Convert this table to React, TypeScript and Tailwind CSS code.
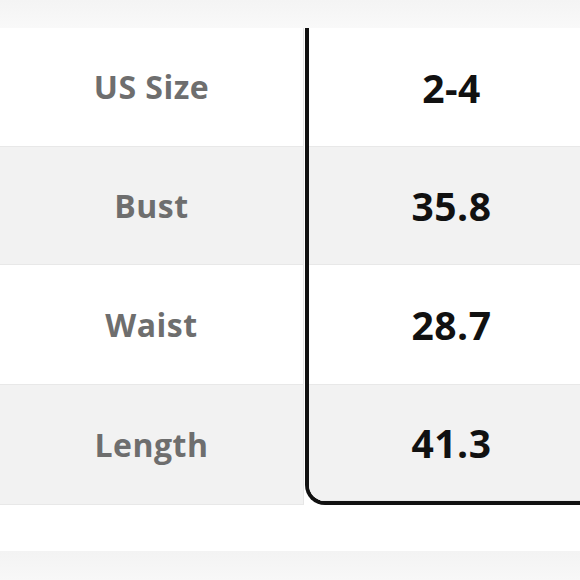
const rows = [
  { label: "US Size", value: "2-4", h: "h-[118px]" },
  { label: "Bust", value: "35.8", h: "h-[119px]" },
  { label: "Waist", value: "28.7", h: "h-[119px]" },
  { label: "Length", value: "41.3", h: "h-[121px]" },
];

export default function App() {
  return (
    <div
      className="w-[580px] h-[580px] overflow-hidden bg-white flex flex-col"
      style={{ fontFamily: '"Open Sans", "Noto Sans", sans-serif' }}
    >
      <div className="h-[28px] shrink-0 bg-gradient-to-b from-[#f4f4f4] to-[#f9f9f9]" />

      <div className="flex w-[598px] shrink-0">
        {/* labels */}
        <div className="w-[304px] flex flex-col">
          {rows.map((r, i) => (
            <div
              key={r.label}
              className={`${r.h} flex items-center justify-center border-r border-[#e6e6e6] ${
                i % 2 === 1 ? "bg-[#f2f2f2] border-y border-y-[#e8e8e8]" : "bg-white"
              }`}
            >
              <span className="text-[32px] font-bold text-[#6e6e6e] leading-none tracking-[0.5px]">
                {r.label}
              </span>
            </div>
          ))}
        </div>

        {/* values */}
        <div className="flex-1 ml-px border-l-4 border-b-4 border-r-4 border-[#111] rounded-bl-[20px] overflow-hidden flex flex-col">
          {rows.map((r, i) => (
            <div
              key={r.value}
              className={`${i === 3 ? "h-[117px]" : r.h} flex items-center justify-center ${
                i % 2 === 1 ? "bg-[#f2f2f2] border-y border-y-[#e8e8e8]" : "bg-white"
              }`}
            >
              <span className="text-[39px] font-bold text-[#111] leading-none tracking-[0.5px]">
                {r.value}
              </span>
            </div>
          ))}
        </div>
      </div>

      <div className="h-[46px] shrink-0 bg-white" />
      <div className="flex-1 bg-gradient-to-b from-[#f3f3f3] to-[#f8f8f8]" />
    </div>
  );
}
